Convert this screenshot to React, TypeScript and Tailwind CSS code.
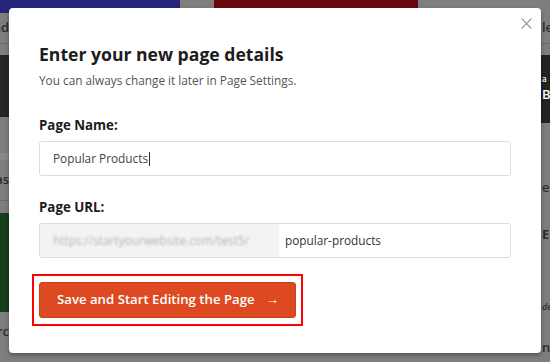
import React from 'react'

const font = { fontFamily: '"Open Sans", "Noto Sans", sans-serif' }

function CloseIcon({ className }: { className?: string }) {
  return (
    <svg className={className} viewBox="0 0 12 12" fill="none" stroke="currentColor" strokeWidth={1.2}>
      <path strokeLinecap="round" d="M1 1l10 10M11 1L1 11" />
    </svg>
  )
}

function Backdrop() {
  return (
    <div className="flex w-[560px] gap-[34px] text-[13px] font-semibold text-[#2c2c2c]">
      {/* left column */}
      <div className="flex w-[180px] shrink-0 flex-col">
        <div className="h-[13px] bg-[#25257c]" />
        <div className="flex h-[30px] items-center justify-end pr-[171px] whitespace-nowrap">and</div>
        <div className="h-px bg-[#6c6c6c]" />
        <div className="mt-[11px] h-[62px] bg-[#262626]" />
        <div className="h-[36px]" />
        <div className="h-[7px] bg-[#888]" />
        <div className="flex h-[40px] items-center justify-end pr-[171px]">as</div>
        <div className="h-px bg-[#6c6c6c]" />
        <div className="mt-[12px] h-[99px] bg-[#163f1b]" />
        <div className="flex h-[40px] items-center justify-end pr-[171px]">erc</div>
      </div>
      {/* middle column */}
      <div className="flex w-[204px] shrink-0 flex-col">
        <div className="h-[13px] bg-[#6a0810]" />
      </div>
      {/* right column */}
      <div className="flex w-[160px] shrink-0 flex-col">
        <div className="h-[13px]" />
        <div className="flex h-[30px] items-center whitespace-nowrap pl-[90px]">le</div>
        <div className="h-px bg-[#6c6c6c]" />
        <div className="mt-[11px] flex h-[68px] flex-col justify-center bg-[#232323] pl-[90px] text-white">
          <span className="text-[8px]">a</span>
          <span>Bo</span>
        </div>
        <div className="mt-[55px] flex h-[20px] items-center pl-[90px]">e</div>
        <div className="mt-[27px] flex h-[20px] items-center pl-[90px] font-bold">ER</div>
        <div className="mt-[52px] flex h-[20px] items-center pl-[90px] text-[9px] italic">de</div>
        <div className="mt-[21px] flex h-[20px] items-center pl-[90px]">ng</div>
      </div>
    </div>
  )
}

export default function App() {
  return (
    <div className="relative h-[362px] w-[550px] overflow-hidden bg-[#7e7e7e]" style={font}>
      <Backdrop />

      {/* Modal */}
      <div className="absolute left-[9px] top-[8px] h-[345px] w-[532px] rounded-[4px] bg-white shadow-[0_2px_4px_rgba(0,0,0,0.35)]">
        <button type="button" aria-label="Close" className="absolute right-[9px] top-[10px] text-[#8a8a8a]">
          <CloseIcon className="h-[11px] w-[11px]" />
        </button>

        <div className="flex flex-col px-[30px] pt-[32px]">
          <h2 className="text-[17.6px] font-bold leading-[28px] text-[#1c1c1c]">Enter your new page details</h2>
          <p className="mt-[2px] text-[11.8px] leading-[20px] text-[#555]">
            You can always change it later in Page Settings.
          </p>

          <label className="mt-[25px] text-[13.3px] font-bold leading-[20px] text-[#1c1c1c]">Page Name:</label>
          <div className="mt-[6px] flex h-[35px] items-center rounded-[3px] border border-[#dcdcdc] pl-[13px] text-[11.8px] text-[#444]">
            <span>Popular Products</span>
            <span className="ml-px h-[14px] w-px bg-[#333]" />
          </div>

          <label className="mt-[21px] text-[13.3px] font-bold leading-[20px] text-[#1c1c1c]">Page URL:</label>
          <div className="mt-[6px] flex h-[35px] overflow-hidden rounded-[3px] border border-[#dcdcdc] text-[11.8px]">
            <div className="flex w-[239px] items-center bg-[#f3f3f3] pl-[13px]">
              <span className="text-[#b4b4b4] blur-[1.2px]">https://startyourwebsite.com/test5/</span>
            </div>
            <div className="flex items-center pl-[6px] text-[#333]">popular-products</div>
          </div>

          <div className="-ml-[7px] mt-[16px] w-fit border-2 border-[#ff0000] px-[5px] py-[6px]">
            <button
              type="button"
              className="flex h-[36px] w-[257px] items-center whitespace-nowrap rounded-[3px] border border-[#c9411c] bg-[#dd4a22] pl-[17px] text-[13.2px] font-semibold text-white"
            >
              Save and Start Editing the Page
              <span className="ml-[11px]">→</span>
            </button>
          </div>
        </div>
      </div>
    </div>
  )
}
